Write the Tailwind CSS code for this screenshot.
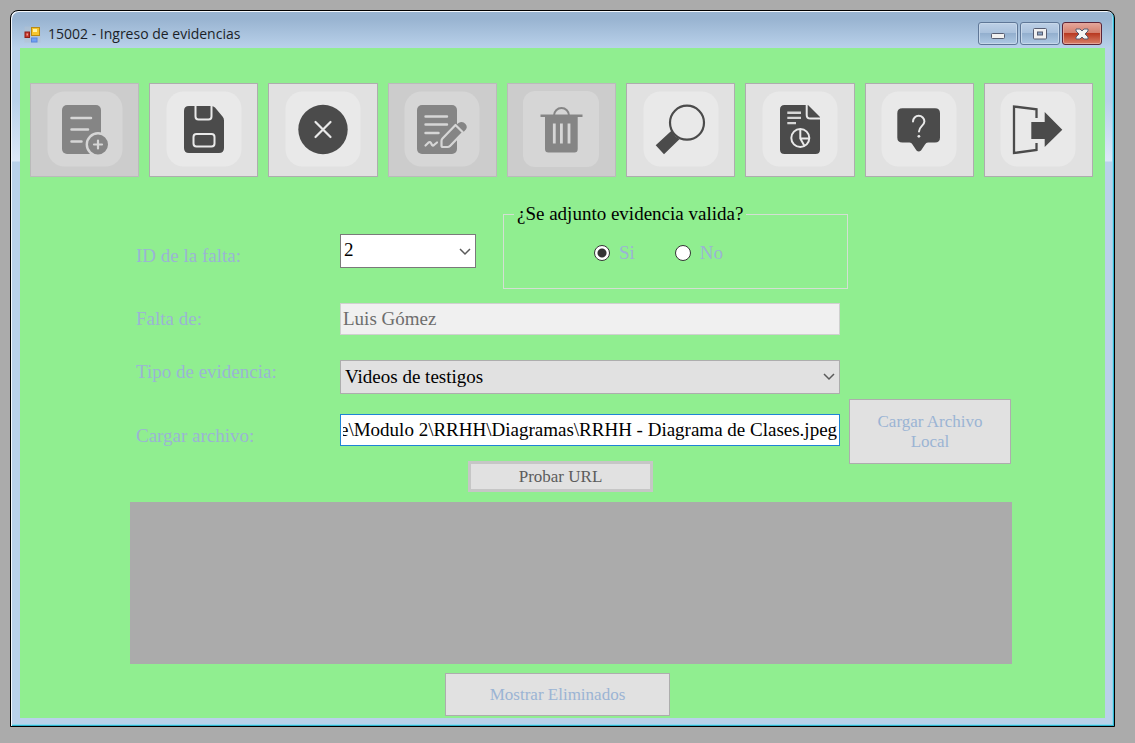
<!DOCTYPE html>
<html lang="es">
<head>
<meta charset="utf-8">
<title>15002 - Ingreso de evidencias</title>
<script src="https://cdn.jsdelivr.net/npm/@tailwindcss/browser@4"></script>
</head>
<body class="flex min-h-screen bg-[#ababab] pt-[10px] pr-5 pb-4 pl-[10px] font-['Liberation_Serif',serif] text-[19px] text-black">
<main class="flex flex-1 flex-col rounded-t-lg border border-black bg-[linear-gradient(to_bottom,#99b4d1_0px,#99b4d1_8px,#b9d1ea_37px,#b9d1ea_90px,#dce8f7_150px,#b9d1ea_151px)] px-[9px] pb-2 shadow-[inset_1px_1px_0_#f4f8fc,inset_-1px_-1px_0_#2fb4d0,inset_-2px_-2px_0_#8fd8ee]">
  <header class="flex h-[37px] items-start">
    <div class="flex flex-1 items-center gap-[7px] pt-3 pl-1">
      <svg class="size-[17px]" viewBox="0 0 17 17" aria-hidden="true">
        <rect x=".5" y=".5" width="16" height="16" fill="#b4c2d0" opacity=".5"/>
        <rect x="1" y="6" width="4.500" height="5.500" fill="#c8372c" stroke="#8d1f19"/>
        <rect x="2.500" y="7.500" width="1.500" height="2" fill="#f0a098"/>
        <rect x="7.500" y="1.500" width="8" height="8" fill="#f6c52c" stroke="#b98a12"/>
        <rect x="9" y="3" width="4" height="3" fill="#fff3a6"/>
        <rect x="7.500" y="12" width="5.500" height="4" fill="#6fa0f2" stroke="#5a86dc"/>
      </svg>
      <h1 class="font-['Open_Sans','Noto_Sans',sans-serif] text-sm leading-[22px] text-[#1b1f28]">15002 - Ingreso de evidencias</h1>
    </div>
    <div class="flex gap-[2px] pt-[11px] pr-[3px]">
      <button type="button" aria-label="Minimizar" class="grid h-[23px] w-10 place-items-center rounded-[3px] border border-[#5f7797] bg-[linear-gradient(#bdd0e6_0%,#a9c1dc_48%,#93afce_50%,#afc9e4_100%)] shadow-[inset_0_0_0_1px_#c7d8ea]">
        <svg class="h-3 w-4" viewBox="0 0 16 12"><rect x="1.500" y="5.500" width="13" height="5" rx="1" fill="#f1f1f1" stroke="#565c70"/></svg>
      </button>
      <button type="button" aria-label="Maximizar" class="grid h-[23px] w-10 place-items-center rounded-[3px] border border-[#5f7797] bg-[linear-gradient(#bdd0e6_0%,#a9c1dc_48%,#93afce_50%,#afc9e4_100%)] shadow-[inset_0_0_0_1px_#c7d8ea]">
        <svg class="h-3 w-4" viewBox="0 0 16 12"><rect x="1.500" y=".5" width="13" height="10.500" rx="1" fill="#f1f1f1" stroke="#565c70"/><rect x="5.500" y="4" width="5" height="3" fill="#8ba6c6" stroke="#565c70"/></svg>
      </button>
      <button type="button" aria-label="Cerrar" class="grid h-[23px] w-10 place-items-center rounded-[3px] border border-[#5b2438] bg-[linear-gradient(#e5a79b_0%,#d4806f_46%,#b93a22_50%,#d98068_100%)] shadow-[inset_0_0_0_1px_#e3a59a]">
        <svg class="h-3 w-4" viewBox="0 0 16 12"><path d="M2 1h4l2 2L10 1h4v2l-3 3 3 3v2h-4L8 9l-2 2H2V9l3-3-3-3z" fill="#f4f4f4" stroke="#565c70" stroke-linejoin="round"/></svg>
      </button>
    </div>
  </header>

  <section class="flex-1 bg-[#90ee90]">
    <nav aria-label="Acciones" class="grid grid-cols-9 gap-[10px] pt-[35px] pr-3 pl-[10px]">
      <button type="button" disabled aria-label="Nuevo" class="grid h-[94px] place-items-center border border-[#bababa] bg-[#cccccc] pb-[2px]">
        <svg class="size-[76px]" viewBox="0 0 76 76"><rect x=".5" y=".5" width="75" height="75" rx="17" fill="#d6d6d6"/>
          <rect x="15" y="14" width="39" height="49" rx="5" fill="#858585"/>
          <path d="M24.500 27H44M24.500 38.500H41M24.500 50.500H34.500" stroke="#d6d6d6" stroke-width="2.500" stroke-linecap="round"/>
          <circle cx="51" cy="53.500" r="11.200" fill="#858585" stroke="#d6d6d6" stroke-width="2.400"/>
          <path d="M47 53.500h8M51 49.500v8" stroke="#d6d6d6" stroke-width="2.200" stroke-linecap="round"/></svg>
      </button>
      <button type="button" aria-label="Guardar" class="grid h-[94px] place-items-center border border-[#adadad] bg-[#e1e1e1] pb-[2px]">
        <svg class="size-[76px]" viewBox="0 0 76 76"><rect x=".5" y=".5" width="75" height="75" rx="17" fill="#e9e9e9"/>
          <path d="M23 15H45.500Q47.500 15 49 16.500L56.500 25.500Q58 27 58 29.500V57Q58 62 53 62H23Q18 62 18 57V20Q18 15 23 15Z" fill="#4b4b4b"/>
          <path d="M29.500 14V25.500Q29.500 28.500 32.500 28.500H42.500Q45.500 28.500 45.500 25.500V14" fill="none" stroke="#e9e9e9" stroke-width="2"/>
          <rect x="27.500" y="43" width="21" height="12.500" rx="3" fill="none" stroke="#e9e9e9" stroke-width="2"/></svg>
      </button>
      <button type="button" aria-label="Cancelar" class="grid h-[94px] place-items-center border border-[#adadad] bg-[#e1e1e1] pb-[2px]">
        <svg class="size-[76px]" viewBox="0 0 76 76"><rect x=".5" y=".5" width="75" height="75" rx="17" fill="#e9e9e9"/>
          <circle cx="38" cy="38.500" r="24.700" fill="#4b4b4b"/>
          <path d="M30.500 31l15 15M45.500 31l-15 15" stroke="#e9e9e9" stroke-width="2.200" stroke-linecap="round"/></svg>
      </button>
      <button type="button" disabled aria-label="Editar" class="grid h-[94px] place-items-center border border-[#bababa] bg-[#cccccc] pb-[2px]">
        <svg class="size-[76px]" viewBox="0 0 76 76"><rect x=".5" y=".5" width="75" height="75" rx="17" fill="#d6d6d6"/>
          <rect x="13" y="14" width="40" height="49" rx="5" fill="#858585"/>
          <path d="M21.500 25.500H43M21.500 33.500H43M21.500 42H34.500" stroke="#d6d6d6" stroke-width="2.400" stroke-linecap="round"/>
          <path d="M21.500 54.500L24.500 51.500Q26 50.500 27 52L28 54Q29 55 30 54L33 51.500" fill="none" stroke="#d6d6d6" stroke-width="2.200" stroke-linecap="round"/>
          <path d="M52 34L54.500 32Q58.500 29.500 61.500 33T60.500 40L59 41.500Z" fill="#858585"/>
          <path d="M37.500 50Q37.500 48.500 38.500 47.500L51.500 34L59 41.500L46 55Q45 56 43.500 56H39Q37.500 56 37.500 54.500Z" fill="#858585" stroke="#d6d6d6" stroke-width="2.200" stroke-linejoin="round"/></svg>
      </button>
      <button type="button" disabled aria-label="Eliminar" class="grid h-[94px] place-items-center border border-[#bababa] bg-[#cccccc] pb-[2px]">
        <svg class="size-[76px]" viewBox="0 0 76 76"><rect x="0" y="0" width="76" height="76" rx="12" fill="#d6d6d6"/>
          <path d="M31 24.500A7.500 7.500 0 0 1 46 24.500" fill="none" stroke="#858585" stroke-width="2"/>
          <path d="M17.500 24.700H59.500" stroke="#858585" stroke-width="2.600"/>
          <path d="M22 25H54.700V58Q54.700 61.500 51.500 61.500H25.500Q22 61.500 22 58Z" fill="#858585"/>
          <path d="M31.300 32.500V52.500M38.400 32.500V52.500M46 32.500V52.500" stroke="#d6d6d6" stroke-width="2.800"/></svg>
      </button>
      <button type="button" aria-label="Buscar" class="grid h-[94px] place-items-center border border-[#adadad] bg-[#e1e1e1] pb-[2px]">
        <svg class="size-[76px]" viewBox="0 0 76 76"><rect x=".5" y=".5" width="75" height="75" rx="17" fill="#e9e9e9"/>
          <circle cx="44" cy="31.700" r="17" fill="none" stroke="#4b4b4b" stroke-width="2.200"/>
          <path d="M12.700 54.300L21 63.300L36.700 48Q31.500 46 28.700 39.500Z" fill="#4b4b4b"/></svg>
      </button>
      <button type="button" aria-label="Reporte" class="grid h-[94px] place-items-center border border-[#adadad] bg-[#e1e1e1] pb-[2px]">
        <svg class="size-[76px]" viewBox="0 0 76 76"><rect x=".5" y=".5" width="75" height="75" rx="17" fill="#e9e9e9"/>
          <path d="M22.500 14H46L58 26V58.500Q58 63 53.500 63H22.500Q18 63 18 58.500V18.500Q18 14 22.500 14Z" fill="#4b4b4b"/>
          <path d="M44.700 13V24Q44.700 27.600 48.500 27.600H58.500" fill="none" stroke="#e9e9e9" stroke-width="2"/>
          <path d="M25.300 21.700H39M25.300 26.900H39M25.300 32.100H34" stroke="#d6d6d6" stroke-width="2.400"/>
          <circle cx="38.300" cy="47" r="9" fill="none" stroke="#e9e9e9" stroke-width="2"/>
          <path d="M38.300 38V47.500L42.500 55M38.300 47.500H47" fill="none" stroke="#e9e9e9" stroke-width="2"/></svg>
      </button>
      <button type="button" aria-label="Ayuda" class="grid h-[94px] place-items-center border border-[#adadad] bg-[#e1e1e1] pb-[2px]">
        <svg class="size-[76px]" viewBox="0 0 76 76"><rect x=".5" y=".5" width="75" height="75" rx="17" fill="#e9e9e9"/>
          <path d="M21.500 17.300H54Q59 17.300 59 22.300V46.500Q59 51.500 54 51.500H47Q45 51.500 44 53.500L40 59.500Q37.700 61.500 35.500 59.500L31.500 53.500Q30.500 51.500 28.500 51.500H21.500Q16.300 51.500 16.300 46.500V22.300Q16.300 17.300 21.500 17.300Z" fill="#4b4b4b"/>
          <path d="M32 30.500A5.700 5.700 0 0 1 43.400 30.500C43.400 34.500 38 35.500 38 40.500" fill="none" stroke="#e9e9e9" stroke-width="2" stroke-linecap="round"/>
          <circle cx="37.900" cy="45.300" r="1.400" fill="#e9e9e9"/></svg>
      </button>
      <button type="button" aria-label="Salir" class="grid h-[94px] place-items-center border border-[#adadad] bg-[#e1e1e1] pb-[2px]">
        <svg class="size-[76px]" viewBox="0 0 76 76"><rect x=".5" y=".5" width="75" height="75" rx="17" fill="#e9e9e9"/>
          <path d="M36.500 27V18.300L14 15.500V62L36.500 59V52" fill="none" stroke="#4b4b4b" stroke-width="2.300"/>
          <path d="M31.300 31H44.700V21L62.300 38.700L44.700 56V48H31.300Z" fill="#4b4b4b"/></svg>
      </button>
    </nav>

    <form class="flex flex-col pt-[25px] pr-[93px] pl-[110px] text-[#9bb4d4]">
      <div class="grid grid-cols-[210px_1fr] items-start">
        <label for="falta" class="pt-[42px] pl-[6px] leading-6">ID de la falta:</label>
        <div class="flex items-start gap-[27px]">
          <div class="relative mt-8 w-[136px]">
            <select id="falta" class="block h-[34px] w-full appearance-none border border-[#7a7a7a] bg-white pb-[2px] pl-[3px] leading-6 text-black"><option>2</option></select>
            <svg class="pointer-events-none absolute top-[14px] right-[5px] h-2 w-3" viewBox="0 0 12 8" fill="none" stroke="#5a5a5a" stroke-width="1.500"><path d="M1 1l5 5 5-5"/></svg>
          </div>
          <fieldset class="h-[87px] w-[345px] border border-[#d3dfd3] px-[10px]">
            <legend class="px-[3px] leading-6 text-black">¿Se adjunto evidencia valida?</legend>
            <div class="flex gap-10 pt-[15px] pl-20 leading-6">
              <label class="flex items-center gap-[9px]"><input type="radio" name="valida" checked class="size-4 appearance-none rounded-full border border-[#333] bg-white checked:bg-[radial-gradient(circle,#333_0px,#333_4px,#fff_5px)]">Si</label>
              <label class="flex items-center gap-[9px]"><input type="radio" name="valida" class="size-4 appearance-none rounded-full border border-[#333] bg-white checked:bg-[radial-gradient(circle,#333_0px,#333_4px,#fff_5px)]">No</label>
            </div>
          </fieldset>
        </div>
      </div>
      <div class="mt-[14px] grid grid-cols-[210px_1fr_172px] items-center">
        <label for="nombre" class="pl-[6px] leading-6">Falta de:</label>
        <input id="nombre" disabled value="Luis Gómez" class="h-8 w-full min-w-0 border border-[#d0d0d0] bg-[#f0f0f0] pl-[2px] text-[#6d6d6d]">
      </div>
      <div class="mt-[25px] grid grid-cols-[210px_1fr_172px] items-start">
        <label for="tipo" class="pl-[6px] leading-6">Tipo de evidencia:</label>
        <div class="relative">
          <select id="tipo" class="block h-[34px] w-full appearance-none border border-[#adadad] bg-[#e1e1e1] pl-1 leading-6 text-black"><option>Videos de testigos</option></select>
          <svg class="pointer-events-none absolute top-[13px] right-[5px] h-2 w-3" viewBox="0 0 12 8" fill="none" stroke="#5a5a5a" stroke-width="1.500"><path d="M1 1l5 5 5-5"/></svg>
        </div>
      </div>
      <div class="mt-[5px] grid grid-cols-[210px_1fr_172px] items-start">
        <label for="archivo" class="pt-[25px] pl-[6px] leading-6">Cargar archivo:</label>
        <div class="pt-[15px]">
          <input id="archivo" value="e\Modulo 2\RRHH\Diagramas\RRHH - Diagrama de Clases.jpeg" class="block h-8 w-full min-w-0 border border-[#1e84d6] bg-white px-[2px] text-black">
          <button type="button" class="mt-[15px] ml-32 block h-[31px] w-[185px] border-[3px] border-[#c6c6c6] bg-[#e1e1e1] text-[17px] leading-5 text-[#5c5c5c]">Probar URL</button>
        </div>
        <button type="button" class="ml-[9px] h-[65px] w-[162px] border border-[#adadad] bg-[#e1e1e1] px-5 text-[17px] leading-5">Cargar Archivo Local</button>
      </div>
      <div class="mt-[10px] h-[162px] bg-[#ababab]"></div>
      <button type="button" class="mt-[9px] ml-[315px] h-[43px] w-[225px] border border-[#adadad] bg-[#e1e1e1] text-[17px] leading-5">Mostrar Eliminados</button>
    </form>
  </section>
</main>
<script>
  // Keep the end of a long path in view
  const archivo = document.getElementById('archivo');
  archivo.scrollLeft = archivo.scrollWidth;
</script>
</body>
</html>
